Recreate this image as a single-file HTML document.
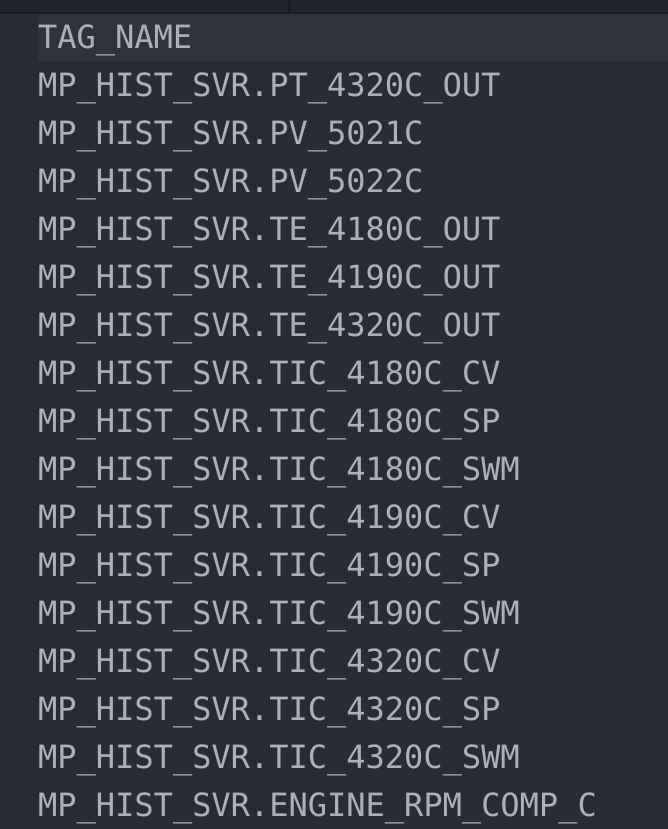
<!DOCTYPE html>
<html><head><meta charset="utf-8"><style>
html,body{margin:0;padding:0;width:668px;height:828px;overflow:hidden;background:#282c34;}
.top{position:absolute;left:0;top:0;width:668px;height:12px;background:#21252b;}
.top .sep{position:absolute;left:288px;top:0;width:2px;height:12px;background:#181a1f;}
.line{position:absolute;left:0;top:12px;width:668px;height:2px;background:#1b1d23;}
.hl{position:absolute;left:38px;top:14px;width:630px;height:47px;background:#2f333d;}
.rows{position:absolute;left:38px;top:13px;font-family:"DejaVu Sans Mono","Liberation Mono",monospace;font-size:32px;color:#aab0bc;text-rendering:geometricPrecision;}
.rows div{height:48px;line-height:48px;white-space:pre;overflow:visible;position:relative;}
</style></head><body>
<div class="top"><div class="sep"></div></div>
<div class="line"></div>
<div class="hl"></div>
<div class="rows">
<div>TAG_NAME</div>
<div>MP_HIST_SVR.PT_4320C_OUT</div>
<div>MP_HIST_SVR.PV_5021C</div>
<div>MP_HIST_SVR.PV_5022C</div>
<div>MP_HIST_SVR.TE_4180C_OUT</div>
<div>MP_HIST_SVR.TE_4190C_OUT</div>
<div>MP_HIST_SVR.TE_4320C_OUT</div>
<div>MP_HIST_SVR.TIC_4180C_CV</div>
<div>MP_HIST_SVR.TIC_4180C_SP</div>
<div>MP_HIST_SVR.TIC_4180C_SWM</div>
<div>MP_HIST_SVR.TIC_4190C_CV</div>
<div>MP_HIST_SVR.TIC_4190C_SP</div>
<div>MP_HIST_SVR.TIC_4190C_SWM</div>
<div>MP_HIST_SVR.TIC_4320C_CV</div>
<div>MP_HIST_SVR.TIC_4320C_SP</div>
<div>MP_HIST_SVR.TIC_4320C_SWM</div>
<div>MP_HIST_SVR.ENGINE_RPM_COMP_C</div>
</div>
</body></html>
